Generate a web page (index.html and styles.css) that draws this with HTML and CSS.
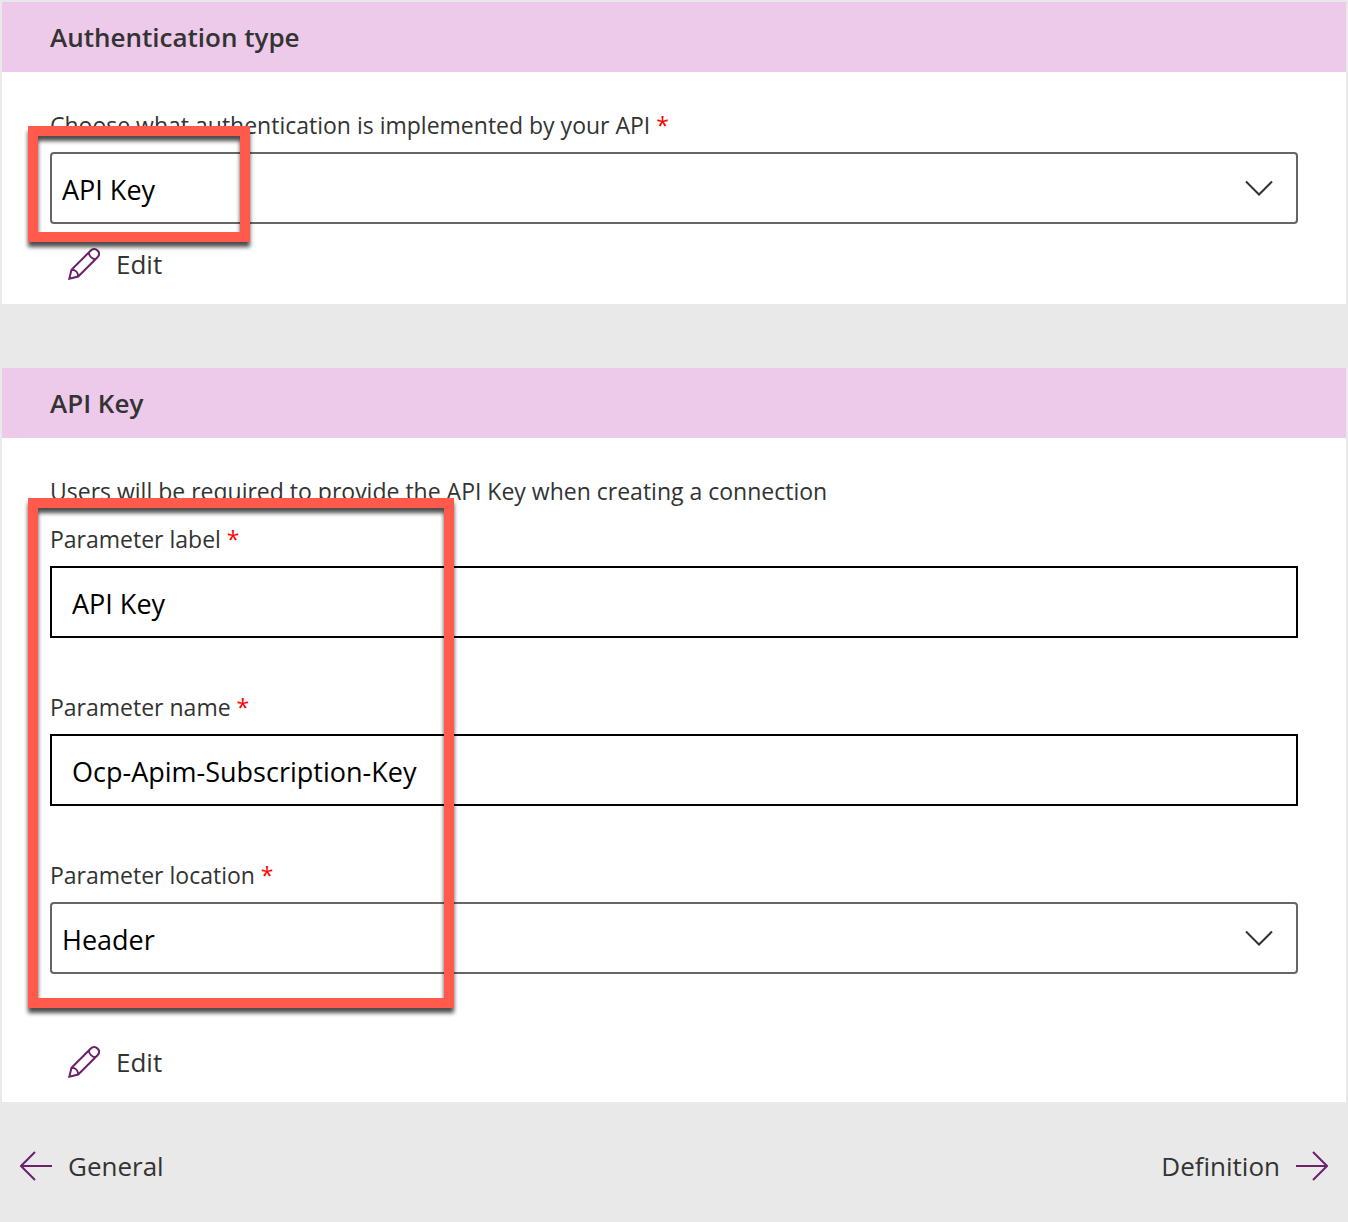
FILE: index.html
```html
<!DOCTYPE html>
<html lang="en">
<head>
<meta charset="utf-8">
<meta name="viewport" content="width=device-width, initial-scale=1">
<title>Custom connector - Security</title>
<link rel="stylesheet" href="styles.css">
</head>
<body>
<svg class="sprite" aria-hidden="true">
  <symbol id="pencil" viewBox="0 0 32 32">
    <path d="M1.300 30.700 3.500 21.800 22.800 2.500C24.800.500 27.500.500 29.500 2.500C31.500 4.500 31.500 7.200 29.500 9.200L10.200 28.500ZM3.500 21.800C7.500 21.800 10.200 24.500 10.200 28.500M20.800 4.500C21.200 8 24 10.800 27.500 11.200"/>
  </symbol>
  <symbol id="chevron" viewBox="0 0 28 16">
    <path d="M1 1.500 14 14.500 27 1.500"/>
  </symbol>
  <symbol id="arrow-left" viewBox="0 0 32 30">
    <path d="M32 15H1M15 1 1 15 15 29"/>
  </symbol>
  <symbol id="arrow-right" viewBox="0 0 32 30">
    <path d="M0 15H31M17 1 31 15 17 29"/>
  </symbol>
</svg>
<main class="page">
  <section class="card">
    <h2 class="card-title">Authentication type</h2>
    <div class="card-body">
      <div class="fields">
        <div class="field">
          <label class="label" for="auth">Choose what authentication is implemented by your API <span class="required">*</span></label>
          <div class="dropdown">
            <select class="control select" id="auth"><option>API Key</option></select>
            <svg class="chevron" aria-hidden="true"><use href="#chevron"/></svg>
          </div>
        </div>
        <div class="highlight highlight-auth"></div>
      </div>
      <button class="action edit" type="button"><svg class="pencil" aria-hidden="true"><use href="#pencil"/></svg>Edit</button>
    </div>
  </section>

  <section class="card">
    <h2 class="card-title">API Key</h2>
    <div class="card-body">
      <p class="label intro">Users will be required to provide the API Key when creating a connection</p>
      <div class="fields">
        <div class="field">
          <label class="label" for="plabel">Parameter label <span class="required">*</span></label>
          <input class="control input" id="plabel" type="text" value="API Key">
        </div>
        <div class="field">
          <label class="label" for="pname">Parameter name <span class="required">*</span></label>
          <input class="control input" id="pname" type="text" value="Ocp-Apim-Subscription-Key">
        </div>
        <div class="field">
          <label class="label" for="ploc">Parameter location <span class="required">*</span></label>
          <div class="dropdown">
            <select class="control select" id="ploc"><option>Header</option></select>
            <svg class="chevron" aria-hidden="true"><use href="#chevron"/></svg>
          </div>
        </div>
        <div class="highlight highlight-params"></div>
      </div>
      <button class="action edit edit-params" type="button"><svg class="pencil" aria-hidden="true"><use href="#pencil"/></svg>Edit</button>
    </div>
  </section>

  <nav class="steps">
    <button class="action" type="button"><svg class="arrow" aria-hidden="true"><use href="#arrow-left"/></svg>General</button>
    <button class="action" type="button">Definition<svg class="arrow" aria-hidden="true"><use href="#arrow-right"/></svg></button>
  </nav>
</main>
</body>
</html>
```
FILE: styles.css
```css
* {
  box-sizing: border-box;
}

body {
  margin: 0;
  background: #e9e9e9;
  color: #333;
  font-family: "Open Sans", "Noto Sans", sans-serif;
}

.sprite {
  display: none;
}

.page {
  padding: 2px;
}

.card {
  background: #fff;
}

.card + .card {
  margin-top: 64px;
}

.card-title {
  margin: 0;
  padding: 17px 48px;
  background: #edc9ea;
  font-size: 26px;
  font-weight: 600;
  line-height: 36px;
}

.card-body {
  padding: 38px 48px 20px;
}

.fields {
  position: relative;
  display: flex;
  flex-direction: column;
  gap: 54px;
}

.field {
  display: flex;
  flex-direction: column;
  gap: 12px;
}

.label {
  font-size: 23px;
  line-height: 30px;
}

.intro {
  margin: 0 0 18px;
}

.required {
  color: #f00;
  line-height: 1;
}

.control {
  width: 100%;
  height: 72px;
  background: #fff;
  color: #000;
  font-family: inherit;
  font-size: 27px;
}

.input {
  padding: 2px 20px 0;
  border: 2px solid #000;
  border-radius: 0;
}

.dropdown {
  display: grid;
  align-items: center;
}

.dropdown > * {
  grid-area: 1 / 1;
}

.select {
  padding: 2px 60px 0 10px;
  border: 2px solid #666;
  border-radius: 4px;
  appearance: none;
}

.chevron {
  justify-self: end;
  width: 28px;
  height: 16px;
  margin-right: 25px;
  fill: none;
  stroke: #333;
  stroke-width: 2;
  pointer-events: none;
}

.action {
  display: flex;
  align-items: center;
  gap: 16px;
  height: 40px;
  padding: 0 18px;
  border: 0;
  background: none;
  color: #333;
  font-family: inherit;
  font-size: 26px;
  line-height: 38px;
}

.edit {
  margin-top: 20px;
}

.edit-params {
  margin-top: 68px;
}

.pencil,
.arrow {
  fill: none;
  stroke: #6b216b;
  stroke-width: 2;
}

.pencil {
  width: 32px;
  height: 32px;
}

.arrow {
  width: 32px;
  height: 30px;
}

.steps {
  display: flex;
  justify-content: space-between;
  padding: 44px 0 36px;
}

.highlight {
  position: absolute;
  left: -22px;
  border: 10px solid #ff5a4b;
  filter: drop-shadow(0 5px 2px rgba(0, 0, 0, 0.7));
  pointer-events: none;
}

.highlight-auth {
  top: 16px;
  bottom: -18px;
  width: 222px;
}

.highlight-params {
  top: -26px;
  bottom: -34px;
  width: 426px;
}
```
